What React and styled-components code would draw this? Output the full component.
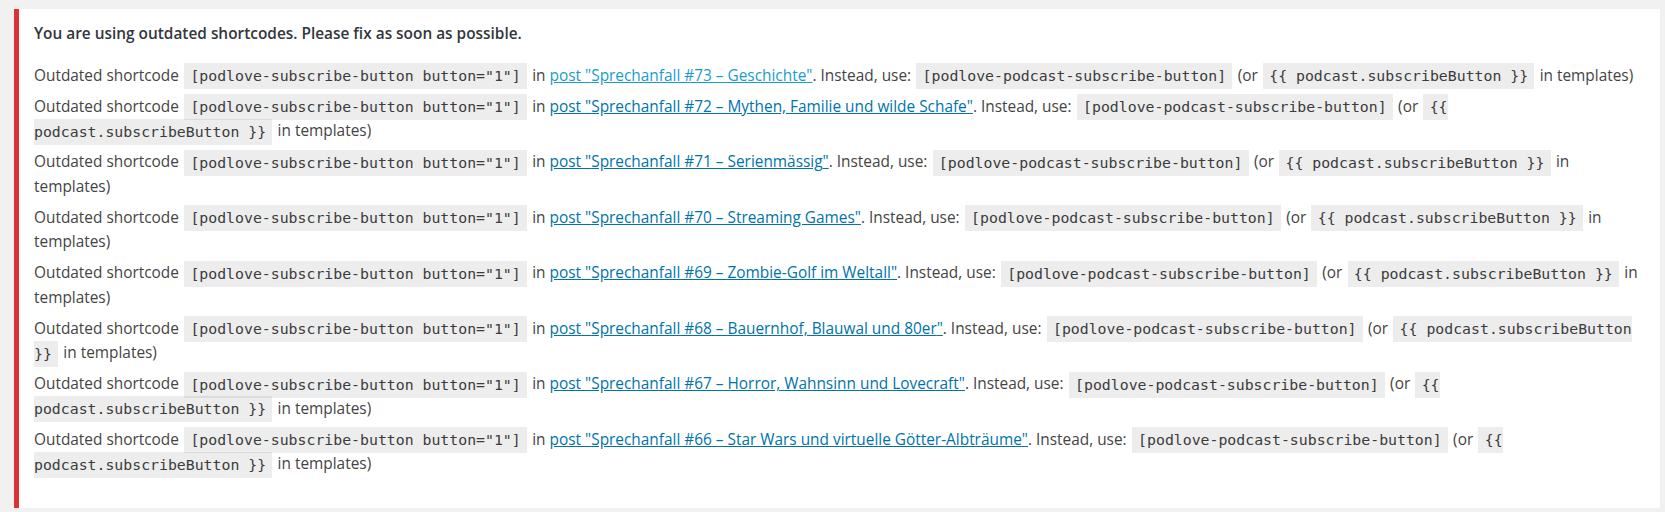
import React from "react";
import styled, { createGlobalStyle } from "styled-components";

const GlobalStyle = createGlobalStyle`
    html, body {
        margin: 0;
        padding: 0;
        background: #f1f1f1;
    }

    body {
        font-family: "Open Sans", "Noto Sans", sans-serif;
        color: #444;
    }
`;

const posts = [
    { title: "Sprechanfall #73 – Geschichte", active: true },
    { title: "Sprechanfall #72 – Mythen, Familie und wilde Schafe" },
    { title: "Sprechanfall #71 – Serienmässig" },
    { title: "Sprechanfall #70 – Streaming Games" },
    { title: "Sprechanfall #69 – Zombie-Golf im Weltall" },
    { title: "Sprechanfall #68 – Bauernhof, Blauwal und 80er" },
    { title: "Sprechanfall #67 – Horror, Wahnsinn und Lovecraft" },
    { title: "Sprechanfall #66 – Star Wars und virtuelle Götter-Albträume" },
];

const App = () => {
    return (
        <>
            <GlobalStyle />
            <Notice>
                <Heading>
                    <strong>You are using outdated shortcodes. Please fix as soon as possible.</strong>
                </Heading>

                <List>
                    {posts.map((post) => (
                        <Line key={post.title}>
                            Outdated shortcode <Code>[podlove-subscribe-button button="1"]</Code> in{" "}
                            <PostLink href="#" $active={post.active}>
                                post "{post.title}"
                            </PostLink>
                            . Instead, use: <Code>[podlove-podcast-subscribe-button]</Code> (or{" "}
                            <Code>{"{{ podcast.subscribeButton }}"}</Code> in templates)
                        </Line>
                    ))}
                </List>
            </Notice>
        </>
    );
};

const Notice = styled.div`
    margin: 9px 5px 0 14px;
    padding: 1px 15px 31px;
    background: #fff;
    border-left: 5px solid #dc3232;
    box-shadow: 0 1px 1px rgba(0, 0, 0, 0.05);
    font-size: 15.4px;
    line-height: 24.5px;
`;

const Heading = styled.p`
    margin: 12.4px 0 16.8px;

    strong {
        font-weight: 600;
        color: #32373c;
    }
`;

const List = styled.div`
    display: flex;
    flex-direction: column;
    gap: 6.5px;
`;

const Line = styled.p`
    margin: 0;
`;

const Code = styled.code`
    margin: 0 1.25px;
    padding: 3.5px 6.25px 5.5px;
    background: rgba(0, 0, 0, 0.07);
    font-family: "DejaVu Sans Mono", "Liberation Mono", monospace;
    font-size: 14.84px;
    line-height: 1;
    color: #3c3c3c;
`;

const PostLink = styled.a`
    color: ${(p) => (p.$active ? "#1a9bd0" : "#0073aa")};
    text-decoration: underline;
`;

export default App;
